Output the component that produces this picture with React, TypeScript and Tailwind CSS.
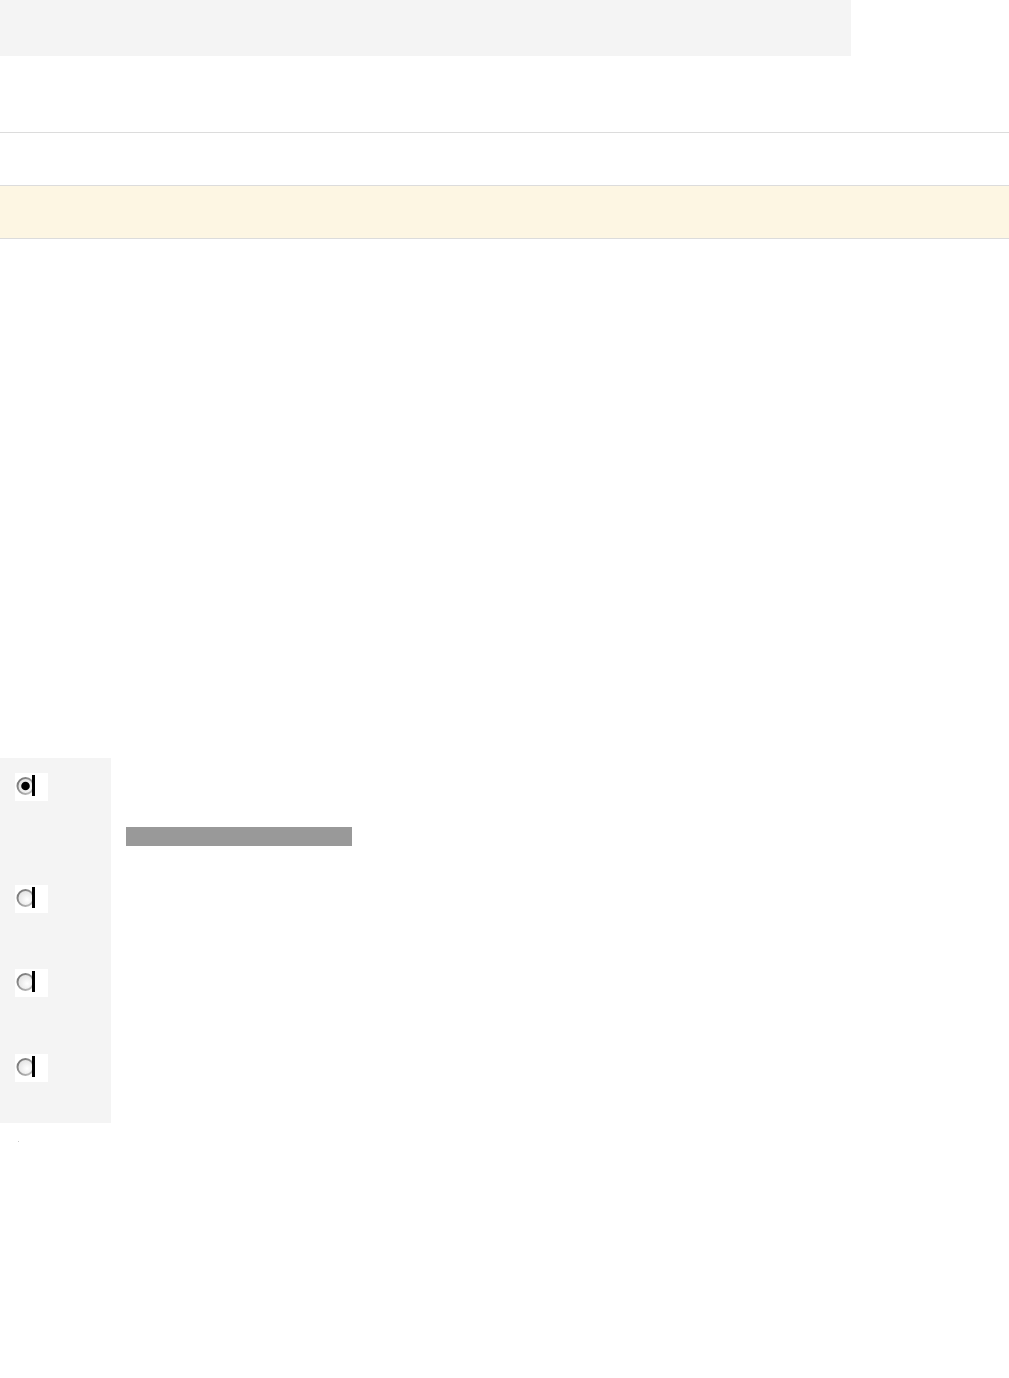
import React from "react";

function Radio({ checked }: { checked?: boolean }) {
  const id = checked ? "rg1" : "rg0";
  return (
    <div className="w-[33px] h-[28px] bg-white">
      <svg width="33" height="28" viewBox="0 0 33 28">
        <defs>
          <linearGradient id={id + "s"} x1="0" y1="0" x2="1" y2="1">
            <stop offset="0" stopColor="#6e6e6e" />
            <stop offset="1" stopColor="#c4c4c4" />
          </linearGradient>
          <radialGradient id={id} cx="0.6" cy="0.6" r="0.6">
            <stop offset="0" stopColor="#ffffff" />
            <stop offset="1" stopColor="#e2e2e2" />
          </radialGradient>
        </defs>
        <circle cx="10.5" cy="13" r="8" fill={`url(#${id})`} stroke={`url(#${id}s)`} strokeWidth="2" />
        {checked && <circle cx="10.5" cy="13" r="4.3" fill="#000" />}
        <rect x="17" y="2" width="3" height="21" fill="#000" />
      </svg>
    </div>
  );
}

export default function App() {
  return (
    <div className="w-[1009px] min-h-[1378px] bg-white font-['Liberation_Sans',sans-serif]">
      <div className="w-[851px] h-[56px] bg-[#f4f4f4]" />
      <div className="h-[76px]" />
      <div className="h-[53px] border-t border-[#dcdcdc]" />
      <div className="h-[54px] border-y border-[#dcdcdc] bg-[#fdf6e3]" />
      <div className="h-[519px]" />
      <div className="flex">
        <div className="w-[111px] h-[365px] bg-[#f4f4f4] pl-[15px] pt-[15px] flex flex-col">
          <Radio checked />
          <div className="mt-[84px]">
            <Radio />
          </div>
          <div className="mt-[56px]">
            <Radio />
          </div>
          <div className="mt-[57px]">
            <Radio />
          </div>
        </div>
        <div className="pl-[15px] pt-[69px]">
          <div className="w-[226px] h-[19px] bg-[#999999]" />
        </div>
      </div>
      <div className="pl-[18px] pt-[18px]">
        <div className="w-[1px] h-[1px] bg-[#cccccc]" />
      </div>
    </div>
  );
}
